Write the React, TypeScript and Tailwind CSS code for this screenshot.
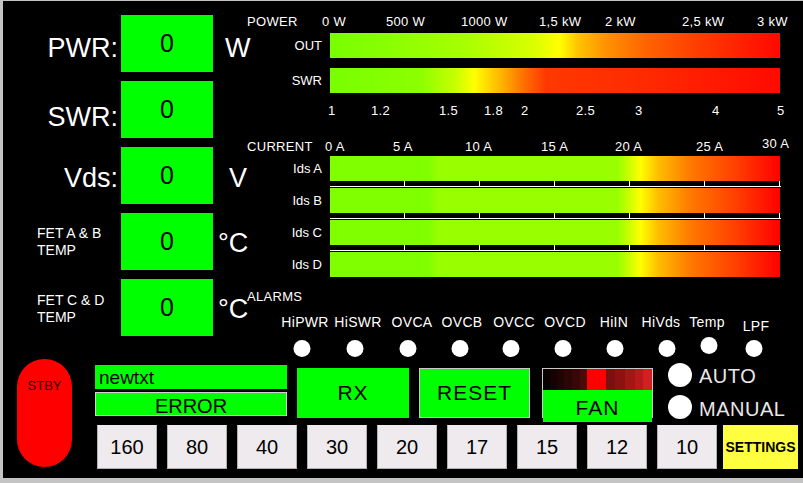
import React from "react";

// column origin for the meter panel (absolute x of its left edge on the page)
const COL = 247;

const powerScale: [string, number][] = [
  ["0 W", 322],
  ["500 W", 386],
  ["1000 W", 461],
  ["1,5 kW", 539],
  ["2 kW", 605],
  ["2,5 kW", 682],
  ["3 kW", 757],
];

const swrScale: [string, number][] = [
  ["1", 328],
  ["1.2", 371],
  ["1.5", 439],
  ["1.8", 484],
  ["2", 521],
  ["2.5", 576],
  ["3", 635],
  ["4", 712],
  ["5", 777],
];

const currentScale: [string, number, number][] = [
  ["0 A", 325, 0],
  ["5 A", 393, 0],
  ["10 A", 465, 0],
  ["15 A", 541, 0],
  ["20 A", 615, 0],
  ["25 A", 696, 0],
  ["30 A", 762, -3],
];

const alarms = [
  { name: "HiPWR", text: 305, dot: 302 },
  { name: "HiSWR", text: 358, dot: 355 },
  { name: "OVCA", text: 412, dot: 408 },
  { name: "OVCB", text: 462, dot: 460 },
  { name: "OVCC", text: 514, dot: 511 },
  { name: "OVCD", text: 565, dot: 563 },
  { name: "HiIN", text: 614, dot: 615 },
  { name: "HiVds", text: 661, dot: 667 },
  { name: "Temp", text: 707, dot: 709, dotTop: 33 },
  { name: "LPF", text: 756, dot: 754, textTop: 14 },
];

const fanLevels = [
  "w-[7px] bg-[#0a0000]",
  "w-[7px] bg-[#160202]",
  "w-[7px] bg-[#200303]",
  "w-[8px] bg-[#2c0505]",
  "w-[8px] bg-[#380707]",
  "w-[7px] bg-[#4a0a0a]",
  "w-[20px] bg-[#ff0000]",
  "w-[9px] bg-[#7a1010]",
  "w-[10px] bg-[#8c1212]",
  "w-[10px] bg-[#a21616]",
  "w-[8px] bg-[#b81a1a]",
  "w-[9px] bg-[#d02024]",
];

const bands = ["160", "80", "40", "30", "20", "17", "15", "12", "10"];

const OUT_GRADIENT =
  "bg-[linear-gradient(to_right,#78ff00_0%,#88ff00_12%,#a8ff00_30%,#d8ff00_45%,#ffff00_51%,#ffc400_55%,#ff9400_61%,#ff6400_70%,#ff3c00_82%,#ff0800_100%)]";
const SWR_GRADIENT =
  "bg-[linear-gradient(to_right,#78ff00_0%,#8cff00_20%,#c8ff00_28%,#ffff00_32%,#ffb400_38%,#ff7000_43%,#ff3800_48%,#ff2a00_70%,#ff0a00_100%)]";
const IDS_GRADIENT =
  "bg-[linear-gradient(to_right,#80ff00_0%,#80ff00_22%,#99ff00_24%,#99ff00_64%,#ffff00_69%,#ffbc00_73%,#ff7a00_80%,#ff4000_90%,#ff0000_100%)]";

function Readout({
  label,
  unit,
  labelClass,
  unitClass,
  small,
}: {
  label: string[];
  unit?: string;
  labelClass: string;
  unitClass?: string;
  small?: boolean;
}) {
  return (
    <div className="flex h-[57px] items-center">
      {small ? (
        <div className={"w-[115px] shrink-0 pl-[34px] text-[14px] leading-[17px] text-white " + labelClass}>
          {label.map((l) => (
            <div key={l} className="whitespace-nowrap">
              {l}
            </div>
          ))}
        </div>
      ) : (
        <div className={"w-[115px] shrink-0 text-right text-[27px] leading-[30px] text-white " + labelClass}>
          {label[0]}
        </div>
      )}
      <div className="ml-[3px] flex h-[57px] w-[92px] shrink-0 items-center justify-center bg-[#00ff00] text-[25px] text-black">
        0
      </div>
      {unit && (
        <div className={"shrink-0 whitespace-nowrap text-[27px] leading-[30px] text-white " + unitClass}>{unit}</div>
      )}
    </div>
  );
}

function ScaleRow({ title, marks }: { title?: string; marks: [string, number, number?][] }) {
  return (
    <div className="relative h-[15px] text-[13px] leading-[15px] tracking-[0.3px] text-white">
      {title && <span className="absolute left-0 top-0">{title}</span>}
      {marks.map(([t, x, dy]) => (
        <span key={t} className="absolute top-0 whitespace-nowrap" style={{ left: x - COL, top: dy ?? 0 }}>
          {t}
        </span>
      ))}
    </div>
  );
}

function Meter({ label, gradient }: { label: string; gradient: string }) {
  return (
    <div className="flex h-[25px] items-center">
      <div className="w-[75px] shrink-0 text-right text-[13px] leading-[15px] text-white">{label}</div>
      <div className={"ml-[8px] h-[25px] w-[450px] shrink-0 " + gradient} />
    </div>
  );
}

function TickRow() {
  return (
    <div className="ml-[83px] w-[451px]">
      <div className="flex h-[5px]">
        {[0, 1, 2, 3, 4, 5].map((i) => (
          <div key={i} className="h-[5px] w-[75px] border-r border-white" />
        ))}
      </div>
      <div className="h-[1px] bg-white" />
      <div className="h-[1px]" />
    </div>
  );
}

export default function App() {
  return (
    <div className="h-[483px] w-[803px] bg-[#c4c4c4] pl-[3px] pt-[1px] font-['Liberation_Sans',Arial,sans-serif]">
      <div className="flex h-[477px] w-[800px] flex-col bg-black">
        {/* top: readouts and meters */}
        <div className="flex h-[357px]">
          <div className="flex w-[244px] shrink-0 flex-col gap-[9px] pt-[14px]">
            <Readout label={["PWR:"]} unit="W" labelClass="mt-[8px]" unitClass="ml-[12px] mt-[8px]" />
            <Readout label={["SWR:"]} labelClass="mt-[14px]" />
            <Readout label={["Vds:"]} unit="V" labelClass="mt-[5px]" unitClass="ml-[16px] mt-[5px]" />
            <Readout label={["FET A & B", "TEMP"]} small unit="°C" labelClass="mt-[1px]" unitClass="ml-[5px] mt-[3px]" />
            <Readout label={["FET C & D", "TEMP"]} small unit="°C" labelClass="mt-[3px]" unitClass="ml-[5px] mt-[3px]" />
          </div>

          <div className="flex flex-1 flex-col pt-[13px]">
            <ScaleRow title="POWER" marks={powerScale} />
            <div className="mt-[4px]">
              <Meter label="OUT" gradient={OUT_GRADIENT} />
            </div>
            <div className="mt-[10px]">
              <Meter label="SWR" gradient={SWR_GRADIENT} />
            </div>
            <div className="mt-[10px]">
              <ScaleRow marks={swrScale} />
            </div>
            <div className="mt-[21px]">
              <ScaleRow title="CURRENT" marks={currentScale} />
            </div>
            <div className="mt-[2px] flex flex-col">
              <Meter label="Ids A" gradient={IDS_GRADIENT} />
              <TickRow />
              <Meter label="Ids B" gradient={IDS_GRADIENT} />
              <TickRow />
              <Meter label="Ids C" gradient={IDS_GRADIENT} />
              <TickRow />
              <Meter label="Ids D" gradient={IDS_GRADIENT} />
            </div>
            <div className="mt-[12px] h-[15px] text-[13px] leading-[15px] tracking-[0.3px] text-white">ALARMS</div>
            <div className="relative h-[53px]">
              {alarms.map((a) => (
                <React.Fragment key={a.name}>
                  <span
                    className="absolute -translate-x-1/2 whitespace-nowrap text-[14px] leading-[16px] tracking-[0.3px] text-white"
                    style={{ left: a.text - COL, top: a.textTop ?? 10 }}
                  >
                    {a.name}
                  </span>
                  <span
                    className="absolute size-[17px] -translate-x-1/2 rounded-full bg-white"
                    style={{ left: a.dot - COL, top: a.dotTop ?? 36 }}
                  />
                </React.Fragment>
              ))}
            </div>
          </div>
        </div>

        {/* bottom: controls */}
        <div className="flex h-[120px]">
          <div className="ml-[14px] mt-[1px] flex h-[108px] w-[55px] justify-center rounded-full bg-[#ff0000] pt-[19px] text-[13px] leading-[15px] text-[#1a0000]">
            STBY
          </div>

          <div className="ml-[23px] flex flex-col pt-[7px]">
            <div className="flex h-[53px]">
              <div className="flex w-[192px] flex-col gap-[3px]">
                <div className="h-[24px] bg-[#00ff00] pl-[4px] text-[19px] leading-[24px] text-black">
                  <span className="inline-block translate-y-[1px]">newtxt</span>
                </div>
                <div className="flex h-[24px] items-center justify-center border border-[#d0d0d0] bg-[#00ff00] text-[20px] text-black">
                  <span className="translate-y-[2px]">ERROR</span>
                </div>
              </div>

              <div className="ml-[10px] mt-[3px] flex h-[50px] w-[112px] items-center justify-center bg-[#00ff00] text-[21px] tracking-[1px] text-black">
                RX
              </div>
              <div className="ml-[10px] mt-[3px] flex h-[50px] w-[111px] items-center justify-center border border-[#c8c8c8] bg-[#00ff00] text-[21px] tracking-[1px] text-black">
                RESET
              </div>
              <div className="ml-[12px] mt-[3px] flex h-[50px] w-[111px] flex-col border border-[#c8c8c8]">
                <div className="flex h-[21px]">
                  {fanLevels.map((c, i) => (
                    <div key={i} className={"h-[21px] " + c} />
                  ))}
                </div>
                <div className="flex flex-1 items-center justify-center bg-[#00ff00] text-[21px] tracking-[1px] text-black">
                  <span className="translate-y-[2px]">FAN</span>
                </div>
              </div>

              <div className="ml-[15px] mt-[-2px] flex flex-col gap-[8px] text-[20px] leading-[24px] text-[#e8e8e8]">
                <div className="flex items-center">
                  <span className="size-[24px] rounded-full bg-white" />
                  <span className="ml-[7px] translate-y-[1px] tracking-[0.5px]">AUTO</span>
                </div>
                <div className="flex items-center">
                  <span className="size-[24px] rounded-full bg-white" />
                  <span className="ml-[7px] translate-y-[2px] tracking-[0.5px]">MANUAL</span>
                </div>
              </div>
            </div>

            <div className="ml-[2px] mt-[7px] flex gap-[10px]">
              {bands.map((b) => (
                <button
                  key={b}
                  className="flex h-[44px] w-[60px] items-center justify-center border border-[#b0b0b0] border-t-[#eeeaee] bg-[#eeeaee] text-[20px] text-black"
                >
                  {b}
                </button>
              ))}
              <button className="-ml-[4px] flex h-[44px] w-[75px] items-center justify-center bg-[#ffff40] text-[14px] font-bold text-black">
                SETTINGS
              </button>
            </div>
          </div>
        </div>
      </div>
    </div>
  );
}
